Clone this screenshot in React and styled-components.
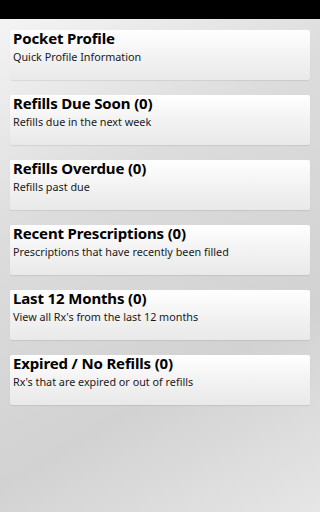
import React from "react";
import styled, { createGlobalStyle } from "styled-components";

const GlobalStyle = createGlobalStyle`
  html, body {
    margin: 0;
    padding: 0;
    height: 100%;
  }
  body {
    font-family: "Noto Sans", "Open Sans", sans-serif;
    color: #000;
  }
  #root {
    min-height: 100%;
  }
`;

const items = [
  { title: "Pocket Profile", subtitle: "Quick Profile Information" },
  { title: "Refills Due Soon (0)", subtitle: "Refills due in the next week" },
  { title: "Refills Overdue (0)", subtitle: "Refills past due" },
  { title: "Recent Prescriptions (0)", subtitle: "Prescriptions that have recently been filled" },
  { title: "Last 12 Months (0)", subtitle: "View all Rx's from the last 12 months" },
  { title: "Expired / No Refills (0)", subtitle: "Rx's that are expired or out of refills" },
];

export default function App() {
  return (
    <>
      <GlobalStyle />
      <Screen>
        <StatusBar />
        <Menu>
          {items.map((item) => (
            <Card key={item.title}>
              <Title>{item.title}</Title>
              <Subtitle>{item.subtitle}</Subtitle>
            </Card>
          ))}
        </Menu>
      </Screen>
    </>
  );
}

const Screen = styled.div`
  width: 100%;
  min-height: 100vh;
  display: flex;
  flex-direction: column;
  background: linear-gradient(150deg, #f6f6f6 0%, #dcdcdc 35%, #d2d2d2 70%, #e6e6e6 100%);
  overflow: hidden;
`;

const StatusBar = styled.div`
  height: 19px;
  background: #000;
  flex-shrink: 0;
`;

const Menu = styled.div`
  display: flex;
  flex-direction: column;
  gap: 15px;
  padding: 11px 10px 0;
`;

const Card = styled.div`
  height: 50px;
  box-sizing: border-box;
  padding: 1px 3px 0;
  border-radius: 2px;
  background: linear-gradient(180deg, #ffffff 0%, #f3f3f3 50%, #e9e9e9 100%);
  box-shadow: 0 1px 1px rgba(0, 0, 0, 0.08);
  display: flex;
  flex-direction: column;
  gap: 5px;
`;

const Title = styled.div`
  font-size: 15px;
  line-height: 15px;
  font-weight: 700;
  letter-spacing: -0.15px;
  white-space: nowrap;
`;

const Subtitle = styled.div`
  font-size: 10.8px;
  line-height: 11px;
  color: #1a1a1a;
  white-space: nowrap;
`;
